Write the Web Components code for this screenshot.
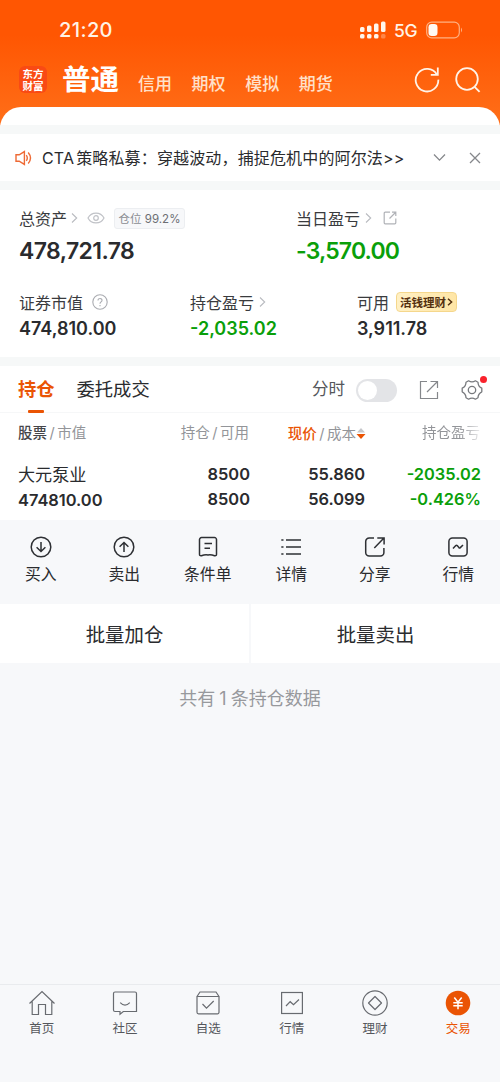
<!DOCTYPE html>
<html lang="zh-CN">
<head>
<meta charset="utf-8">
<meta name="viewport" content="width=device-width, initial-scale=1">
<title>交易</title>
<style>
  html, body {
    margin: 0;
    height: 100%;
  }

  body {
    font-family: Inter, "Noto Sans CJK SC", sans-serif;
    color: #2a2b2e;
    background: #f7f8fa;
    --brand: #ea5404;
    --down: #0a9f0a;
    --gap: #f6f8f8;
  }
</style>
</head>
<body>

<trade-screen>
  <status-bar slot="top" time="21:20" network="5G"></status-bar>
  <account-nav slot="top">
    <span slot="current">普通</span>
    <span>信用</span>
    <span>期权</span>
    <span>模拟</span>
    <span>期货</span>
  </account-nav>

  <notice-bar>CTA<i></i>策略私募：穿越波动，捕捉危机中的阿尔法&gt;&gt;</notice-bar>

  <asset-summary>
    <asset-figure slot="main" large style="width: 277px" value="478,721.78">
      总资产
      <line-icon slot="extra" name="chevron" style="margin-left: 4px"></line-icon>
      <line-icon slot="extra" name="eye" style="margin-left: 9px"></line-icon>
      <ratio-tag slot="extra">仓位 <b>99.2%</b></ratio-tag>
    </asset-figure>
    <asset-figure slot="main" large down value="-3,570.00">
      当日盈亏
      <line-icon slot="extra" name="chevron" style="margin-left: 5px"></line-icon>
      <line-icon slot="extra" name="share-small" style="margin-left: 11px"></line-icon>
    </asset-figure>
    <asset-figure slot="detail" style="width: 171px" value="474,810.00">
      证券市值
      <line-icon slot="extra" name="help" style="margin-left: 9px"></line-icon>
    </asset-figure>
    <asset-figure slot="detail" style="width: 167px" down value="-2,035.02">
      持仓盈亏
      <line-icon slot="extra" name="chevron" style="margin-left: 5px"></line-icon>
    </asset-figure>
    <asset-figure slot="detail" value="3,911.78">
      可用
      <promo-tag slot="extra">活钱理财</promo-tag>
    </asset-figure>
  </asset-summary>

  <holdings-panel>
    <span slot="tab">持仓</span>
    <span slot="other">委托成交</span>
    <span slot="switch">分时</span>
    <holding-row name="大元泵业" worth="474810.00" amount="8500" usable="8500"
      price="55.860" cost="56.099" profit="-2035.02" rate="-0.426%"></holding-row>
  </holdings-panel>

  <action-bar>
    <action-item icon="buy">买入</action-item>
    <action-item icon="sell">卖出</action-item>
    <action-item icon="order">条件单</action-item>
    <action-item icon="list">详情</action-item>
    <action-item icon="share">分享</action-item>
    <action-item icon="quote">行情</action-item>
  </action-bar>

  <batch-bar add="批量加仓" sell="批量卖出">共有<i></i>1<i></i>条持仓数据</batch-bar>

  <tab-bar slot="bottom">
    <tab-item icon="home">首页</tab-item>
    <tab-item icon="chat">社区</tab-item>
    <tab-item icon="watch">自选</tab-item>
    <tab-item icon="market">行情</tab-item>
    <tab-item icon="wealth">理财</tab-item>
    <tab-item icon="trade" active>交易</tab-item>
  </tab-bar>
</trade-screen>

<script>
/**
 * Icon drawings: [width, height, stroke width, colour, markup].
 */
const ICONS = {
  refresh: [26, 28, 1.8, '#fff3e8', '<path d="M22.800 8.500A11.300 11.300 0 1 0 24.300 13.600"/><path d="M23.800 1.500v7.300h-7"/>'],
  search: [26, 28, 1.8, '#fff3e8', '<circle cx="12" cy="13" r="10.8"/><path d="M19.6 20.8l5 5"/>'],
  speaker: [17, 16, 1.4, '#ee6a35', '<path d="M1 4.8h3.2L9.4 1.6v12.8L4.2 11.2H1z"/><path d="M11.3 5.1q2 2.9 0 5.8M13.2 2.5q4.6 5.5 0 11"/>'],
  down: [13, 9, 1.3, '#85878b', '<path d="M1 1.5l5.5 5.6L12 1.5"/>'],
  close: [12, 12, 1.3, '#85878b', '<path d="M1 1l10 10M11 1L1 11"/>'],
  chevron: [7, 12, 1.1, '#b9bbc0', '<path d="M1 1.5L5.7 6 1 10.5"/>'],
  eye: [18, 12, 1.2, '#c0c2c7', '<path d="M1 6C4.4-.6 13.6-.6 17 6 13.6 12.6 4.4 12.6 1 6z"/><circle cx="9" cy="6" r="2.3"/>'],
  help: [16, 16, 1.1, '#aaacb1', '<circle cx="8" cy="8" r="7.2"/><path d="M6 6.5c.1-2.9 4.2-2.6 4 0C9.9 8 8 7.9 8 9.7M8 11.1v1.2"/>'],
  'share-small': [14, 14, 1.2, '#b0b2b7', '<path d="M7 1.2H2.2a1 1 0 0 0-1 1v9.6a1 1 0 0 0 1 1h9.6a1 1 0 0 0 1-1V7.5M6.5 7.5l6-6M9 1.2h3.8V5"/>'],
  export: [20, 20, 1.2, '#85878b', '<path d="M8 1.5H1.5v17h17V12M8 12L18 2M11.5 1.5h7V8"/>'],
  gear: [22, 22, 1.3, '#77797d', '<path d="M7.6 1.8Q11 4 14.4 1.8L17 3.2Q17 7.4 20.8 9.2V12.8Q17 14.6 17 18.8L14.4 20.2Q11 18 7.6 20.2L5 18.8Q5 14.6 1.2 12.8V9.2Q5 7.4 5 3.2z" stroke-linejoin="round"/><circle cx="11" cy="11" r="3.7"/>'],
  buy: [22, 22, 1.5, '#2e3034', '<circle cx="11" cy="11" r="9.8"/><path d="M11 6v9.5M6.6 11.3L11 15.5l4.4-4.2"/>'],
  sell: [22, 22, 1.5, '#2e3034', '<circle cx="11" cy="11" r="9.8"/><path d="M11 16V6.5M6.6 10.7L11 6.5l4.4 4.2"/>'],
  order: [22, 22, 1.5, '#2e3034', '<path d="M4.500 1.600h13a2 2 0 0 1 2 2v14.600q0 1.900-1.900 1.500Q14 18.300 11 18.900 8 18.300 4.400 19.700 2.500 20.100 2.500 18.200V3.600a2 2 0 0 1 2-2zM7.500 7.500h7.500M7.500 12.200H13"/>'],
  list: [22, 22, 1.5, '#2e3034', '<path d="M6 4h15M6 11h15M6 18h15M1.3 4h2.2M1.3 11h2.2M1.3 18h2.2"/>'],
  share: [22, 22, 1.5, '#2e3034', '<path d="M10 1.9H5.2a3.5 3.5 0 0 0-3.5 3.5v11.2a3.5 3.5 0 0 0 3.5 3.5h11.2a3.5 3.5 0 0 0 3.5-3.5V12M10.3 12L19.7 2.3M13.3 1.9h6.8V8.5"/>'],
  quote: [22, 22, 1.5, '#2e3034', '<rect x="1.9" y="1.900" width="18.200" height="18.200" rx="3.500"/><path d="M6 12.600l2.800-3q.700-.700 1.400 0l1.700 2q.700.700 1.400 0l2.700-2.600"/>'],
  home: [28, 26, 1.2, '#686b70', '<path d="M1.5 13.5L14 1.5l12.5 12M4.2 11.5V24.5h6.3v-10h7v10h6.3V11.5"/>'],
  chat: [28, 26, 1.2, '#686b70', '<path d="M4 2h20a1.5 1.5 0 0 1 1.5 1.5v18H12.3L9 24.3V21.5H4A1.5 1.5 0 0 1 2.5 20V3.5A1.5 1.5 0 0 1 4 2zM9.2 12.700q4.800 4.800 9.600 0"/>'],
  watch: [28, 26, 1.2, '#686b70', '<path d="M3 6.5h22v15.8a1.5 1.5 0 0 1-1.5 1.5h-19A1.5 1.5 0 0 1 3 22.3zM3 6.5L6 2h16l3 4.5M8.5 14l4 4.2 7.2-7.2"/>'],
  market: [28, 26, 1.2, '#686b70', '<rect x="3.6" y="2.5" width="20.8" height="21"/><path d="M8 16l4.2-4.3 3.3 3L21 9.5"/>'],
  wealth: [28, 26, 1.2, '#686b70', '<circle cx="14" cy="13" r="12.2"/><path d="M14 6.5l6.5 6.5-6.5 6.5L7.5 13z" stroke-linejoin="round"/>'],
  trade: [28, 26, 1.5, '#fff', '<circle cx="14" cy="13" r="12.3" fill="#ea5404" stroke="none"/><path d="M10.3 7.5L14 12.2l3.7-4.7M14 12.2v7M9.3 12.7h9.4M9.3 15.7h9.4"/>'],
};

/**
 * Attach an open shadow root holding the given markup.
 * @param {HTMLElement} host
 * @param {string} html
 */
function render(host, html) {
  const root = host.shadowRoot || host.attachShadow({ mode: 'open' });
  root.innerHTML = html;
}

/** Single stroked icon, picked by the name attribute. */
class LineIcon extends HTMLElement {
  connectedCallback() {
    const [w, h, stroke, color, body] = ICONS[this.getAttribute('name')];
    render(this, `
      <style>
        :host { display: block; flex: none; }
        svg { display: block; }
      </style>
      <svg width="${w}" height="${h}" viewBox="0 0 ${w} ${h}" fill="none" stroke="${color}" stroke-width="${stroke}">${body}</svg>`);
  }
}

/** Full page frame: orange top, content, bottom tabs. */
class TradeScreen extends HTMLElement {
  connectedCallback() {
    render(this, `
      <style>
        :host { display: flex; flex-direction: column; height: 1082px; width: 500px; overflow: hidden; }
        header { height: 134px; background: linear-gradient(#ff5602 0 35px, #ff6c16 115px); }
        .lip { height: 18px; border-radius: 21px 21px 0 0; background: #fff; border-bottom: 9px solid var(--gap); }
        main { flex: 1; }
      </style>
      <header><slot name="top"></slot><div class="lip"></div></header>
      <main><slot></slot></main>
      <slot name="bottom"></slot>`);
  }
}

class StatusBar extends HTMLElement {
  connectedCallback() {
    render(this, `
      <style>
        :host {
          display: flex; align-items: center; height: 60px; box-sizing: border-box;
          padding: 0 37px 0 59px; color: #fff3e6; font-weight: 600;
        }
        .time { flex: 1; font-size: 20px; font-weight: 500; letter-spacing: .4px; }
        .net { font-size: 17.5px; font-weight: 500; margin: 0 9px 0 8px; letter-spacing: -.5px; }
        svg { display: block; }
      </style>
      <span class="time">${this.getAttribute('time')}</span>
      <svg width="26" height="20" fill="#fff6ec">
        <rect x="0" y="7" width="4.5" height="5" rx="1.5"/>
        <rect x="7" y="5.5" width="4.5" height="6.5" rx="1.5"/>
        <rect x="14" y="3.5" width="4.5" height="8.5" rx="1.5"/>
        <rect x="21" y="1.5" width="4.5" height="10.5" rx="1.5"/>
        <rect x="0" y="14" width="4.5" height="4.5" rx="1.5"/>
        <rect x="7" y="14" width="4.5" height="4.5" rx="1.5"/>
        <rect x="14" y="14" width="4.5" height="4.5" rx="1.5"/>
        <rect x="21" y="14" width="4.5" height="4.5" rx="1.5" opacity=".3"/>
      </svg>
      <span class="net">${this.getAttribute('network')}</span>
      <svg width="37" height="18">
        <rect x=".7" y="1.2" width="32.6" height="15.6" rx="5" fill="none" stroke="#ffb182" stroke-width="1.2"/>
        <rect x="2.5" y="3" width="9" height="12" rx="3.2" fill="#fffaf4"/>
        <path d="M35 6.5v5q2-2.5 0-5z" fill="#ffb182"/>
      </svg>`);
  }
}

class AccountNav extends HTMLElement {
  connectedCallback() {
    render(this, `
      <style>
        :host { display: flex; align-items: flex-start; height: 47px; padding: 0 19px; color: #ffe0c9; }
        .logo {
          width: 28px; height: 27px; margin-top: 6px; padding: 2px 3px 0; box-sizing: border-box; border-radius: 6px;
          background: #f94a14; color: #fff; text-align: center; word-break: break-all;
          font: 700 10.5px/12px "Noto Sans CJK SC", sans-serif;
        }
        .current { margin: 0 19px 0 15px; font-size: 28.5px; line-height: 39px; font-weight: 700; color: #fff; }
        .others { display: flex; gap: 19.6px; flex: 1; margin-top: 7px; font-size: 17px; line-height: 34px; font-weight: 500; }
        line-icon { margin: 6px 0 0 15px; }
      </style>
      <div class="logo">东方财富</div>
      <div class="current"><slot name="current"></slot></div>
      <div class="others"><slot></slot></div>
      <line-icon name="refresh"></line-icon>
      <line-icon name="search"></line-icon>`);
  }
}

class NoticeBar extends HTMLElement {
  connectedCallback() {
    render(this, `
      <style>
        :host {
          display: flex; align-items: center; height: 47px; padding: 0 19px 0 15px;
          background: #fff; border-bottom: 9px solid var(--gap);
        }
        .text { flex: 1; margin: -2px 0 0 10px; font-size: 16px; letter-spacing: .15px; white-space: nowrap; }
        ::slotted(i) { display: inline-block; width: 2px; }
        line-icon[name=close] { margin-left: 23px; }
      </style>
      <line-icon name="speaker"></line-icon>
      <div class="text"><slot></slot></div>
      <line-icon name="down"></line-icon>
      <line-icon name="close"></line-icon>`);
  }
}

class AssetSummary extends HTMLElement {
  connectedCallback() {
    render(this, `
      <style>
        :host {
          display: flex; flex-direction: column; height: 167px;
          background: #fff; border-bottom: 9px solid var(--gap);
        }
        .row { display: flex; padding: 0 19px; }
        .main { padding-top: 17px; height: 83px; box-sizing: border-box; }
        .detail { padding-top: 18px; }
      </style>
      <div class="row main"><slot name="main"></slot></div>
      <div class="row detail"><slot name="detail"></slot></div>`);
  }
}

/** Label with optional extras above a number. */
class AssetFigure extends HTMLElement {
  connectedCallback() {
    render(this, `
      <style>
        :host { display: block; }
        .label { display: flex; align-items: center; height: 22px; font-size: 16px; color: #3a3b3e; white-space: nowrap; }
        .value { font-size: 18px; line-height: 24px; margin-top: 4px; font-weight: 600; white-space: nowrap; }
        :host([large]) .value { font-size: 23px; line-height: 30px; margin-top: 7px; letter-spacing: -.6px; }
        :host([down]) .value { color: var(--down); }
        :host([large][down]) .value { letter-spacing: -.85px; }
      </style>
      <div class="label"><slot></slot><slot name="extra"></slot></div>
      <div class="value">${this.getAttribute('value')}</div>`);
  }
}

class RatioTag extends HTMLElement {
  connectedCallback() {
    render(this, `
      <style>
        :host {
          display: block; box-sizing: border-box; width: 71px; height: 21px; margin-left: 9px;
          border: 1px solid #eceef1; border-radius: 3px; background: #f7f8fa;
          font-size: 11.5px; line-height: 20px; text-align: center; color: #8b8d92;
        }
        ::slotted(b) { font-weight: 400; color: #6c6e73; }
      </style>
      <slot></slot>`);
  }
}

class PromoTag extends HTMLElement {
  connectedCallback() {
    render(this, `
      <style>
        :host {
          display: flex; align-items: center; justify-content: center; gap: 1px;
          box-sizing: border-box; width: 61px; height: 20px; margin-left: 7px;
          border: 1px solid #f5d78c; border-radius: 4px; background: linear-gradient(90deg, #fff0c4, #ffe6a6);
          font-size: 11.5px; font-weight: 700; color: #54300f;
        }
      </style>
      <slot></slot>
      <svg width="6" height="8" fill="none" stroke="#54300f" stroke-width="1.5"><path d="M1 .8L4.6 4 1 7.2"/></svg>`);
  }
}

class HoldingsPanel extends HTMLElement {
  connectedCallback() {
    render(this, `
      <style>
        :host { display: block; height: 154px; background: #fff; }
        .tabs {
          display: flex; align-items: center; height: 46px; padding: 0 18px;
          border-bottom: 1px solid #f6f7f8; font-size: 18.3px; line-height: 48px;
        }
        .tab { position: relative; color: var(--brand); font-weight: 600; }
        .tab::after {
          content: ''; position: absolute; left: 10px; bottom: 0;
          width: 16px; height: 3px; border-radius: 1px; background: var(--brand);
        }
        .other { flex: 1; margin-left: 22px; }
        .switch { font-size: 16.5px; color: #55575b; }
        .toggle { width: 37px; height: 19px; margin: 2px 22px 0 11px; padding: 2px; border-radius: 12px; background: #e3e4e7; }
        .toggle::before { content: ''; display: block; width: 19px; height: 19px; border-radius: 50%; background: #fff; }
        .gear { position: relative; margin: 2px -1px 0 22px; }
        .gear::after {
          content: ''; position: absolute; right: -4px; top: -3px;
          width: 7px; height: 7px; border-radius: 50%; background: #f9222c;
        }
        .export { margin-top: 1px; }
        .head { display: flex; height: 40px; line-height: 39px; padding: 0 20px 0 18px; font-size: 14.5px; color: #939599; white-space: nowrap; }
        .head > * { text-align: right; }
        .head .a { width: 116px; text-align: left; }
        .head .b { width: 115px; }
        .head .c { width: 117px; display: flex; align-items: center; justify-content: flex-end; }
        .head .d { flex: 1; -webkit-mask: linear-gradient(90deg, #000 82%, rgba(0, 0, 0, .2)); mask: linear-gradient(90deg, #000 82%, rgba(0, 0, 0, .2)); }
        b { font-weight: 500; color: #454649; }
        .c b { color: var(--brand); }
        s { text-decoration: none; margin: 0 2.5px; }
      </style>
      <div class="tabs">
        <span class="tab"><slot name="tab"></slot></span>
        <span class="other"><slot name="other"></slot></span>
        <span class="switch"><slot name="switch"></slot></span>
        <span class="toggle"></span>
        <line-icon class="export" name="export"></line-icon>
        <span class="gear"><line-icon name="gear"></line-icon></span>
      </div>
      <div class="head">
        <span class="a"><b>股票</b><s>/</s>市值</span>
        <span class="b">持仓<s>/</s>可用</span>
        <span class="c"><b>现价</b><s>/</s>成本<svg width="10" height="13"><path d="M1 5.5h8L5 1z" fill="#c6c7ca"/><path d="M.5 7h9L5 12z" fill="#ea5404"/></svg></span>
        <span class="d">持仓盈亏</span>
      </div>
      <slot></slot>`);
  }
}

/** One position: two stacked values per column. */
class HoldingRow extends HTMLElement {
  connectedCallback() {
    const get = name => this.getAttribute(name);
    render(this, `
      <style>
        :host { display: flex; padding: 9px 19px 0 18px; font-size: 16.4px; line-height: 25px; font-weight: 600; white-space: nowrap; }
        div { text-align: right; }
        .a { width: 116px; text-align: left; }
        .a span { font-size: 17.1px; font-weight: 400; }
        .b { width: 116px; }
        .c { width: 115px; }
        .d { flex: 1; color: var(--down); }
      </style>
      <div class="a"><span>${get('name')}</span><br>${get('worth')}</div>
      <div class="b">${get('amount')}<br>${get('usable')}</div>
      <div class="c">${get('price')}<br>${get('cost')}</div>
      <div class="d">${get('profit')}<br>${get('rate')}</div>`);
  }
}

class ActionBar extends HTMLElement {
  connectedCallback() {
    render(this, `
      <style>
        :host { display: flex; height: 84px; margin-left: -1px; }
        ::slotted(*) { flex: 1; }
      </style>
      <slot></slot>`);
  }
}

class ActionItem extends HTMLElement {
  connectedCallback() {
    render(this, `
      <style>
        :host { display: flex; flex-direction: column; align-items: center; padding-top: 16px; font-size: 15.8px; line-height: 24px; }
        span { margin-top: 5px; }
      </style>
      <line-icon name="${this.getAttribute('icon')}"></line-icon>
      <span><slot></slot></span>`);
  }
}

/** Two wide buttons with a slotted note under them. */
class BatchBar extends HTMLElement {
  connectedCallback() {
    render(this, `
      <style>
        :host { display: block; text-align: center; }
        .buttons { display: flex; gap: 2px; }
        .buttons div { flex: 1; height: 59px; line-height: 62px; background: #fff; font-size: 19.4px; }
        .note { margin-top: 22px; font-size: 18px; line-height: 28px; color: #97999d; }
        ::slotted(i) { display: inline-block; width: 4px; }
      </style>
      <div class="buttons">
        <div>${this.getAttribute('add')}</div>
        <div>${this.getAttribute('sell')}</div>
      </div>
      <div class="note"><slot></slot></div>`);
  }
}

class TabBar extends HTMLElement {
  connectedCallback() {
    render(this, `
      <style>
        :host { display: flex; height: 97px; border-top: 1px solid #e9ebee; }
        ::slotted(*) { flex: 1; }
      </style>
      <slot></slot>`);
  }
}

class TabItem extends HTMLElement {
  connectedCallback() {
    render(this, `
      <style>
        :host { display: flex; flex-direction: column; align-items: center; padding-top: 5px; font-size: 12.5px; line-height: 18px; color: #55575c; }
        :host([active]) { color: var(--brand); }
        span { margin-top: 4px; }
      </style>
      <line-icon name="${this.getAttribute('icon')}"></line-icon>
      <span><slot></slot></span>`);
  }
}

customElements.define('line-icon', LineIcon);
customElements.define('trade-screen', TradeScreen);
customElements.define('status-bar', StatusBar);
customElements.define('account-nav', AccountNav);
customElements.define('notice-bar', NoticeBar);
customElements.define('asset-summary', AssetSummary);
customElements.define('asset-figure', AssetFigure);
customElements.define('ratio-tag', RatioTag);
customElements.define('promo-tag', PromoTag);
customElements.define('holdings-panel', HoldingsPanel);
customElements.define('holding-row', HoldingRow);
customElements.define('action-bar', ActionBar);
customElements.define('action-item', ActionItem);
customElements.define('batch-bar', BatchBar);
customElements.define('tab-bar', TabBar);
customElements.define('tab-item', TabItem);
</script>
</body>
</html>
